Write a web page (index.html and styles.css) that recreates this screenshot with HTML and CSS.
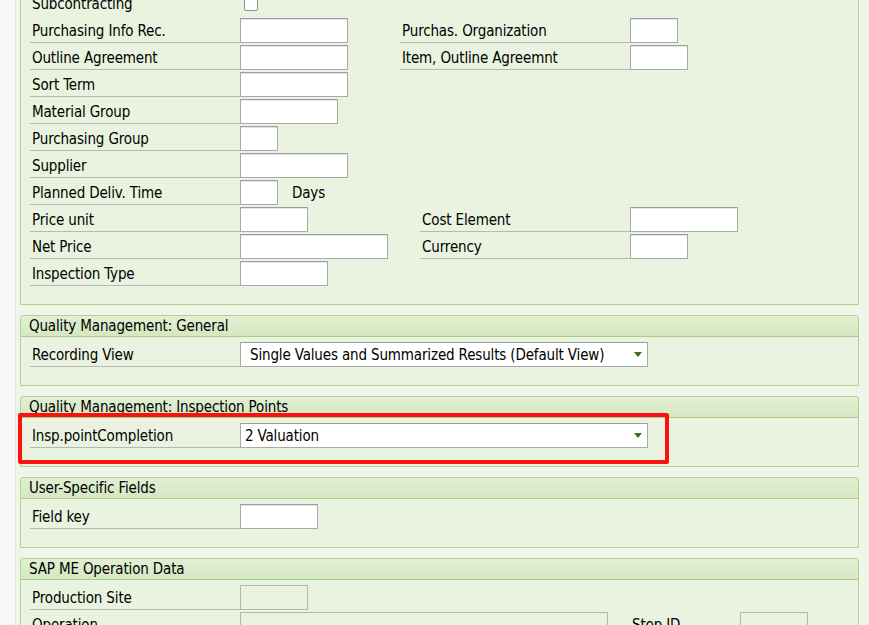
FILE: index.html
```html
<!DOCTYPE html>
<html>
<head>
<meta charset="utf-8">
<link rel="stylesheet" href="styles.css">
</head>
<body>
<div class="page">
  <div class="sidebar"></div>
  <div class="content">

    <div class="group first">
      <div class="gbody">
        <div class="row">
          <div class="label nol">Subcontracting</div>
          <div class="field"><span class="check"></span></div>
        </div>
        <div class="row">
          <div class="label">Purchasing Info Rec.</div>
          <div class="field f160"><span class="inp w108"></span></div>
          <div class="label wide">Purchas. Organization</div>
          <div class="field"><span class="inp w48"></span></div>
        </div>
        <div class="row">
          <div class="label">Outline Agreement</div>
          <div class="field f160"><span class="inp w108"></span></div>
          <div class="label wide">Item, Outline Agreemnt</div>
          <div class="field"><span class="inp w58"></span></div>
        </div>
        <div class="row">
          <div class="label">Sort Term</div>
          <div class="field"><span class="inp w108"></span></div>
        </div>
        <div class="row">
          <div class="label">Material Group</div>
          <div class="field"><span class="inp w98"></span></div>
        </div>
        <div class="row">
          <div class="label">Purchasing Group</div>
          <div class="field"><span class="inp w38"></span></div>
        </div>
        <div class="row">
          <div class="label">Supplier</div>
          <div class="field"><span class="inp w108"></span></div>
        </div>
        <div class="row">
          <div class="label">Planned Deliv. Time</div>
          <div class="field"><span class="inp w38"></span><span class="unit">Days</span></div>
        </div>
        <div class="row">
          <div class="label">Price unit</div>
          <div class="field f180"><span class="inp w68"></span></div>
          <div class="label">Cost Element</div>
          <div class="field"><span class="inp w108"></span></div>
        </div>
        <div class="row">
          <div class="label">Net Price</div>
          <div class="field f180"><span class="inp w148"></span></div>
          <div class="label">Currency</div>
          <div class="field"><span class="inp w58"></span></div>
        </div>
        <div class="row">
          <div class="label">Inspection Type</div>
          <div class="field"><span class="inp w88"></span></div>
        </div>
      </div>
    </div>

    <div class="group">
      <div class="ghead">Quality Management: General</div>
      <div class="gbody">
        <div class="row">
          <div class="label">Recording View</div>
          <div class="field">
            <span class="select pad9">Single Values and Summarized Results (Default View)<span class="arrow"></span></span>
          </div>
        </div>
      </div>
    </div>

    <div class="group">
      <div class="ghead">Quality Management: Inspection Points</div>
      <div class="gbody">
        <div class="row">
          <div class="label">Insp.pointCompletion</div>
          <div class="field">
            <span class="select pad4">2 Valuation<span class="arrow"></span></span>
          </div>
        </div>
      </div>
      <div class="highlight"></div>
    </div>

    <div class="group">
      <div class="ghead">User-Specific Fields</div>
      <div class="gbody">
        <div class="row">
          <div class="label">Field key</div>
          <div class="field"><span class="inp w78"></span></div>
        </div>
      </div>
    </div>

    <div class="group">
      <div class="ghead">SAP ME Operation Data</div>
      <div class="gbody">
        <div class="row">
          <div class="label">Production Site</div>
          <div class="field"><span class="inp dis w68"></span></div>
        </div>
        <div class="row">
          <div class="label">Operation</div>
          <div class="field f390"><span class="inp dis w368"></span></div>
          <div class="label l3">Step ID</div>
          <div class="field"><span class="inp dis w68"></span></div>
        </div>
      </div>
    </div>

  </div>
</div>
</body>
</html>
```

FILE: styles.css
```css
html, body {
  margin: 0;
  padding: 0;
  height: 100%;
  overflow: hidden;
}
body {
  background: #f0f5ea;
  font-family: "DejaVu Sans Condensed", "DejaVu Sans", sans-serif;
  font-size: 15px;
  letter-spacing: -0.15px;
  color: #000;
}
.page {
  display: flex;
  height: 100%;
}
.sidebar {
  width: 15px;
  flex: none;
  background: #f9faf8;
  border-right: 1px solid #e2e7dd;
}
.content {
  padding-left: 4px;
  width: 839px;
}
.group {
  position: relative;
  border: 1px solid #b2d294;
  background: #eaf3df;
  margin-top: 10px;
  border-radius: 3px 3px 0 0;
}
.group.first {
  margin-top: -12px;
}
.ghead {
  height: 20px;
  line-height: 21px;
  padding-left: 8px;
  background: linear-gradient(#e1efd3, #d5e8c1);
  border-bottom: 1px solid #a9cb8b;
  border-radius: 3px 3px 0 0;
}
.gbody {
  padding: 3px 0 18px 9px;
}
.group.first .gbody {
  padding-top: 0;
}
.row {
  display: flex;
  height: 27px;
}
.label {
  width: 208px;
  height: 26px;
  line-height: 30px;
  padding-left: 2px;
  border-bottom: 1px solid #b6b8b4;
  white-space: nowrap;
  flex: none;
}
.label.nol {
  border-bottom-color: transparent;
}
.label.wide {
  width: 228px;
}
.label.l3 {
  width: 108px;
}
.field {
  display: flex;
  align-items: flex-start;
  flex: none;
}
.f160 { width: 160px; }
.f180 { width: 180px; }
.f390 { width: 390px; }
.inp {
  display: block;
  box-sizing: border-box;
  height: 25px;
  margin-top: 2px;
  background: #fff;
  border: 1px solid #a9a9a9;
  border-top-color: #9c9c9c;
  box-shadow: inset 0 1px 0 #e6e6e6;
}
.inp.dis {
  background: #eaf3df;
  border-color: #b4b7b1;
  box-shadow: none;
}
.w38 { width: 38px; }
.w48 { width: 48px; }
.w58 { width: 58px; }
.w68 { width: 68px; }
.w78 { width: 78px; }
.w88 { width: 88px; }
.w98 { width: 98px; }
.w108 { width: 108px; }
.w148 { width: 148px; }
.w368 { width: 368px; }
.unit {
  margin-left: 14px;
  line-height: 30px;
}
.check {
  display: block;
  box-sizing: border-box;
  width: 14px;
  height: 14px;
  margin: 8px 0 0 4px;
  background: #fff;
  border: 1px solid #8e8e8e;
  border-radius: 2px;
}
.select {
  position: relative;
  display: block;
  box-sizing: border-box;
  width: 408px;
  height: 25px;
  margin-top: 2px;
  line-height: 24px;
  background: #fff;
  border: 1px solid #a9a9a9;
  border-top-color: #9c9c9c;
  white-space: nowrap;
}
.pad9 { padding-left: 9px; }
.pad4 { padding-left: 4px; }
.arrow {
  position: absolute;
  right: 5px;
  top: 9px;
  width: 0;
  height: 0;
  border-left: 4.5px solid transparent;
  border-right: 4.5px solid transparent;
  border-top: 5px solid #3e6c22;
}
.highlight {
  position: absolute;
  left: -3px;
  top: 16px;
  width: 643px;
  height: 43px;
  border: 4px solid #ff1010;
  border-radius: 2px;
}
```
